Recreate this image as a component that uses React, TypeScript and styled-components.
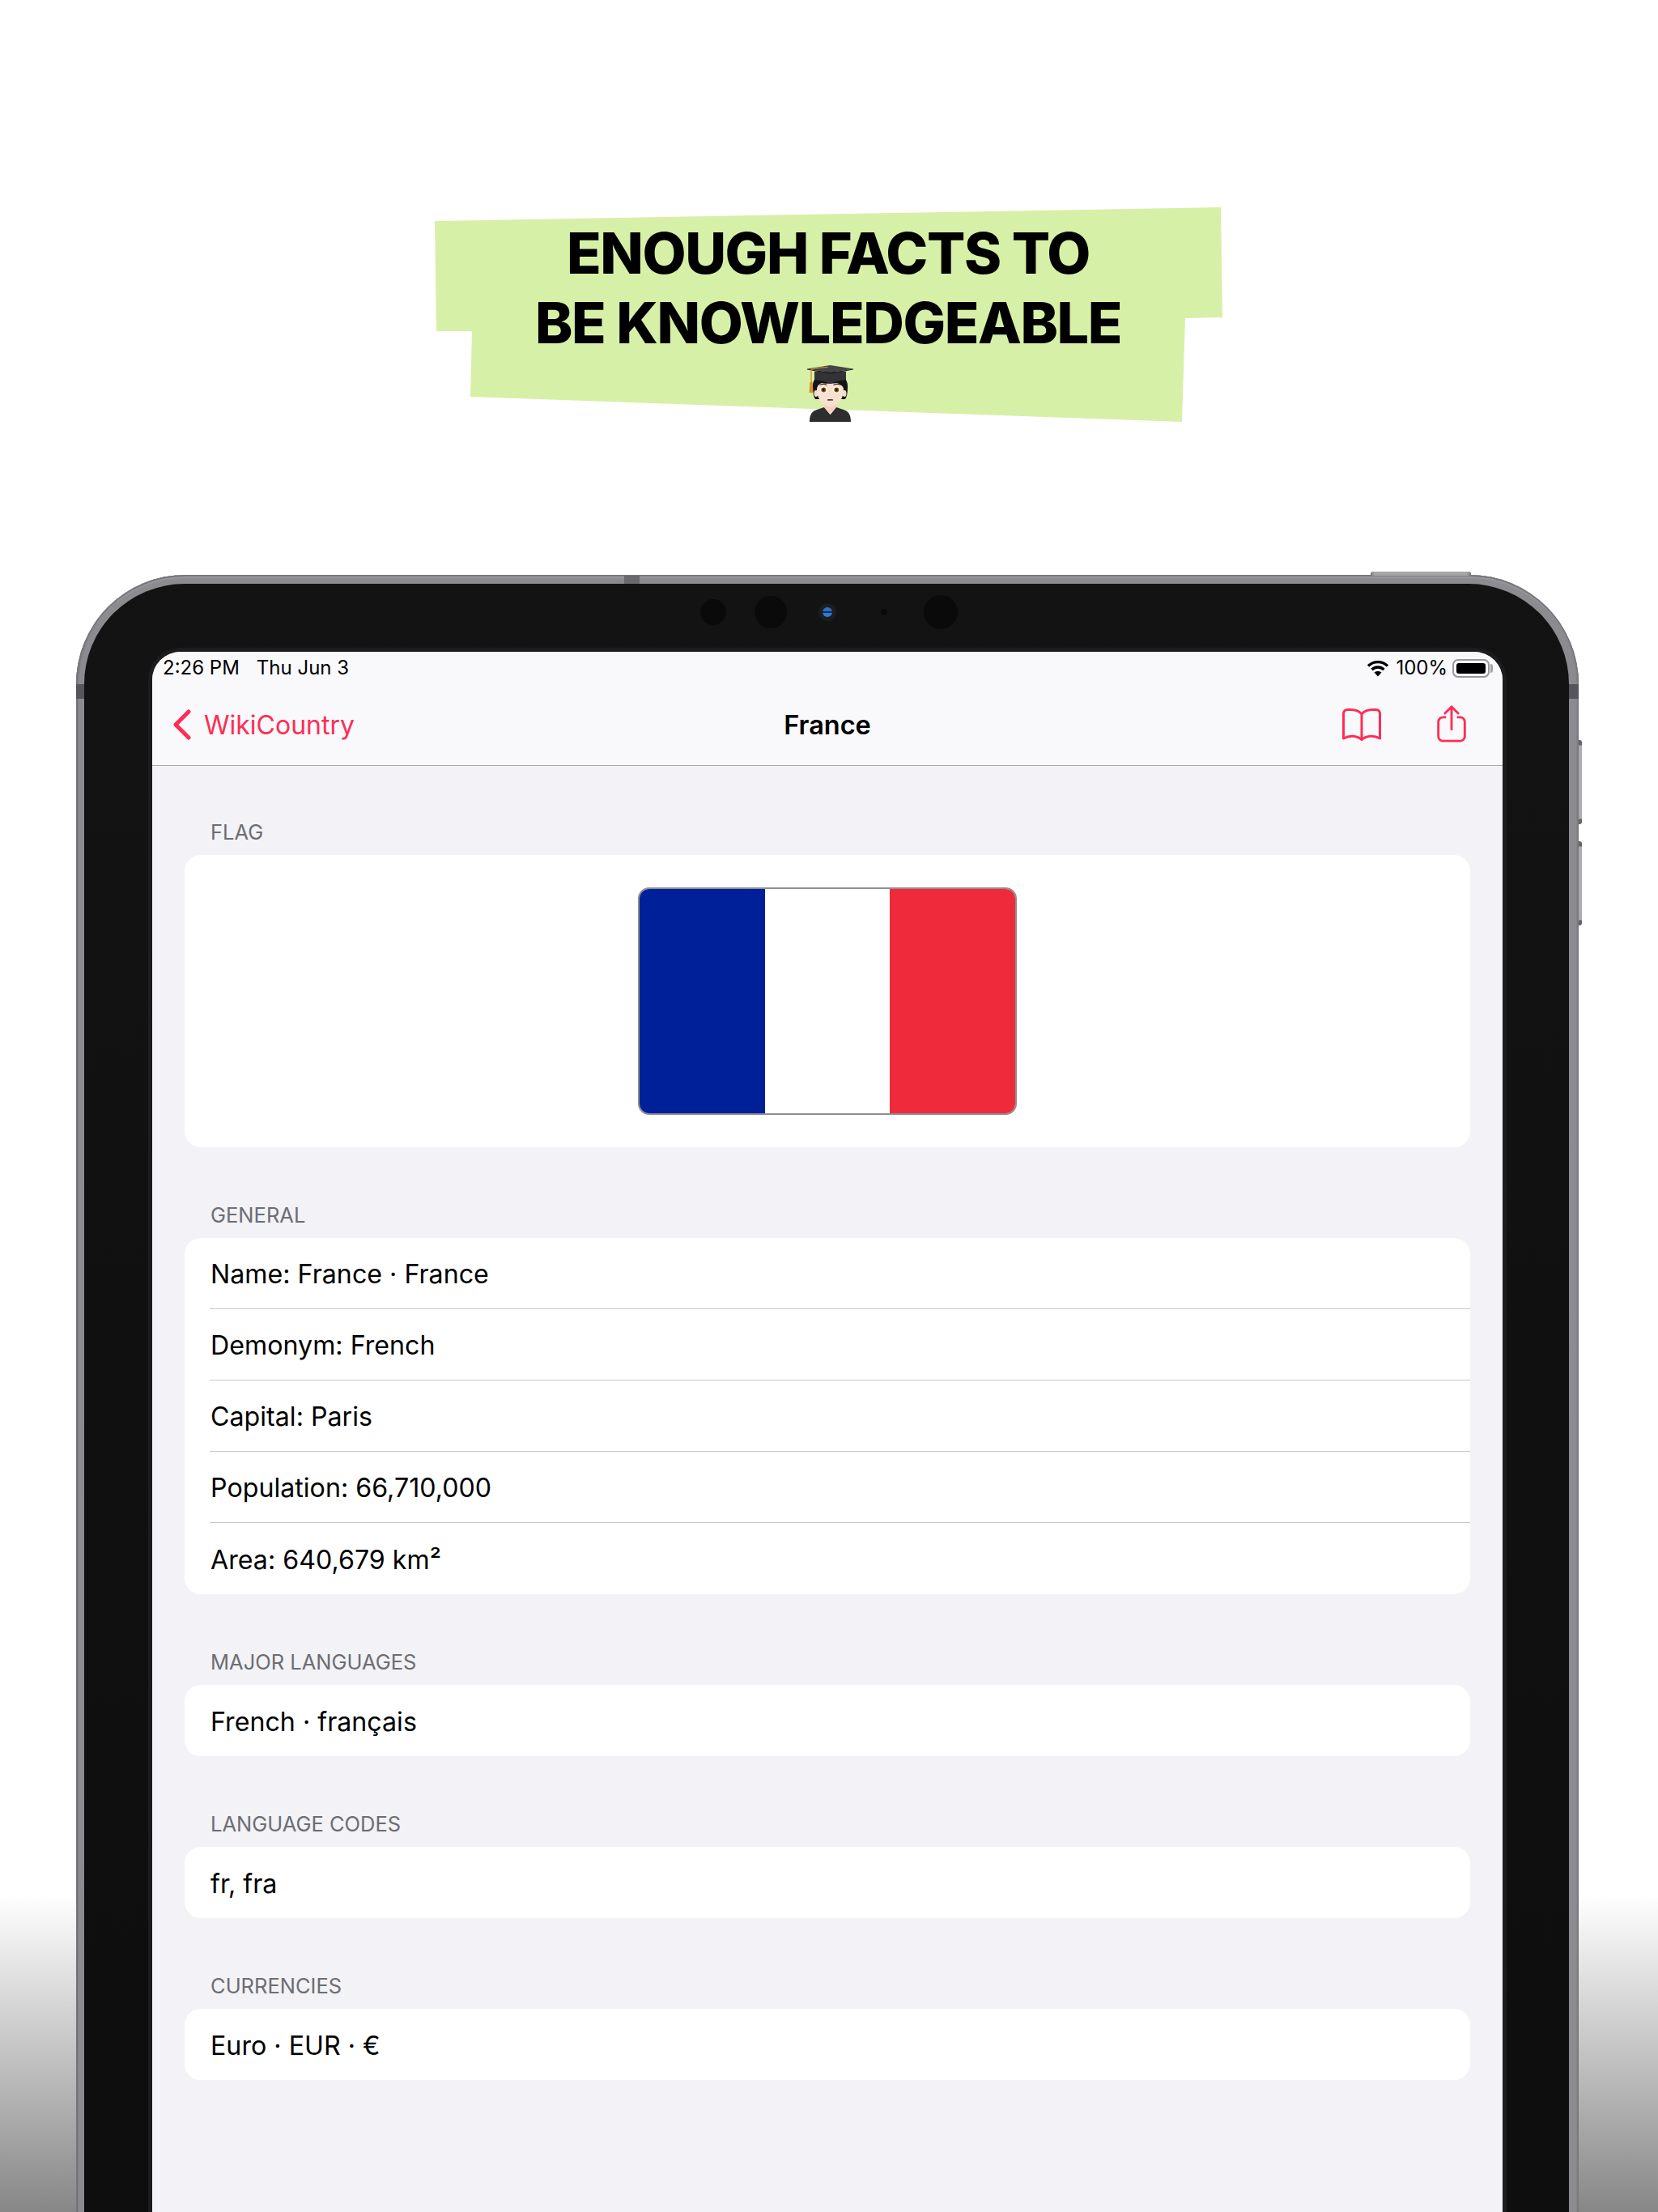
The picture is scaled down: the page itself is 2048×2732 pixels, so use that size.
import React from "react";
import styled, { createGlobalStyle } from "styled-components";

const Global = createGlobalStyle`
  html, body { margin: 0; padding: 0; background: #fff; }
  * { box-sizing: border-box; }
  body { font-family: Inter, "Liberation Sans", sans-serif; }
`;

const Page = styled.div`
  width: 2048px;
  height: 2732px;
  overflow: hidden;
  padding-top: 256px;
  background: linear-gradient(180deg, #fff 0, #fff 2340px, #878787 2732px);
`;

const Banner = styled.div`
  position: relative;
  width: 974px;
  height: 265px;
  margin-left: 537px;
  padding-top: 14px;
  display: flex;
  flex-direction: column;
  align-items: center;
  &::before {
    content: "";
    position: absolute;
    inset: 0;
    background: #d7f0a8;
    clip-path: polygon(0 17px, 971px 0, 973px 136px, 927px 137px, 923px 265px, 44px 234px, 46px 153px, 2px 153px);
  }
`;

const Headline = styled.h1`
  position: relative;
  margin: 0;
  width: 100%;
  padding-right: 2px;
  text-align: center;
  font-size: 70px;
  line-height: 86px;
  font-weight: 800;
  letter-spacing: -1.4px;
  color: #000;
`;

const Graduate = styled.svg`
  position: relative;
  display: block;
  width: 57px;
  height: 70px;
  margin: 9px 0 0 2px;
`;

const Device = styled.div`
  position: relative;
  width: 1856px;
  height: 2200px;
  margin: 189px 0 0 94px;
  padding: 11px 12px 0 10px;
  border-radius: 135px 135px 0 0;
  background: #8b8b90;
  box-shadow: inset 0 1px 0 1px #77777b, inset 0 4px 3px -1px #a6a6aa, inset 2px 0 2px #66666c, inset -2px 0 2px #77777b;
`;

const SideBand = styled.span<{ $side: "left" | "right" }>`
  position: absolute;
  top: 135px;
  ${(p) => (p.$side === "left" ? "left: 0; width: 10px;" : "right: 0; width: 12px;")}
  height: 18px;
  background: #56565a;
`;

const TopBand = styled.span`
  position: absolute;
  top: 1px;
  left: 677px;
  width: 19px;
  height: 10px;
  background: #6a6a6e;
`;

const PowerButton = styled.span`
  position: absolute;
  top: -4px;
  left: 1599px;
  width: 124px;
  height: 5px;
  border-radius: 3px 3px 0 0;
  background: linear-gradient(90deg, #77777a, #a7a7aa 4%, #a7a7aa 96%, #77777a);
`;

const VolumeButton = styled.span<{ $top: number }>`
  position: absolute;
  top: ${(p) => p.$top}px;
  right: -4px;
  width: 4px;
  height: 104px;
  border-radius: 0 3px 3px 0;
  background: linear-gradient(180deg, #66666a 0, #66666a 6px, #adadb0 7px, #adadb0 97px, #66666a 98px);
`;

const Bezel = styled.div`
  position: relative;
  height: 100%;
  padding: 79px 77px 0 79px;
  border-radius: 124px 124px 0 0;
  background: linear-gradient(180deg, #131313 0, #0e0e0e 1800px);
`;

const Sensors = styled.div`
  position: absolute;
  top: 14px;
  left: 761px;
  height: 42px;
  display: flex;
  align-items: center;
`;

const Lens = styled.span<{ $size: number; $gap: number }>`
  display: block;
  flex: none;
  width: ${(p) => p.$size}px;
  height: ${(p) => p.$size}px;
  margin-left: ${(p) => p.$gap}px;
  border-radius: 50%;
  background: #0a0a0a;
`;

const Camera = styled.span`
  flex: none;
  width: 22px;
  height: 22px;
  margin-left: 39px;
  display: grid;
  place-items: center;
  border-radius: 50%;
  background: #1b1d22;
  &::after {
    content: "";
    width: 12px;
    height: 12px;
    border-radius: 50%;
    background: linear-gradient(180deg, #2f6fc0 0, #2f6fc0 40%, #0d2a52 42%, #0d2a52 58%, #2f7bd0 60%);
  }
`;

const Screen = styled.div`
  height: 100%;
  border: 5px solid #1c1c1e;
  border-bottom: 0;
  border-radius: 40px 40px 0 0;
  overflow: hidden;
  background: #f2f2f7;
`;

const TopBar = styled.header`
  height: 141px;
  background: #f9f9fb;
  border-bottom: 1px solid #a8a8aa;
`;

const StatusBar = styled.div`
  height: 38px;
  padding: 2px 16px 0 13px;
  display: flex;
  justify-content: space-between;
  align-items: center;
  font-size: 24px;
  line-height: 28px;
  color: #000;
`;

const StatusGroup = styled.div`
  display: flex;
  align-items: center;
`;

const DateText = styled.span`
  margin-left: 21px;
`;

const Percent = styled.span`
  margin: 0 6px 0 8px;
`;

const Battery = styled.span`
  position: relative;
  width: 46px;
  height: 23px;
  padding: 3px;
  border: 2px solid #97979b;
  border-radius: 7px;
  &::before {
    content: "";
    display: block;
    height: 100%;
    border-radius: 3px;
    background: #000;
  }
  &::after {
    content: "";
    position: absolute;
    top: 4px;
    right: -6px;
    width: 3px;
    height: 11px;
    border-radius: 0 3px 3px 0;
    background: #a0a0a4;
  }
`;

const NavBar = styled.nav`
  height: 102px;
  padding-top: 2px;
  display: grid;
  grid-template-columns: 1fr auto 1fr;
  align-items: center;
`;

const BackLink = styled.div`
  padding-left: 25px;
  display: flex;
  align-items: center;
  gap: 16px;
  font-size: 32px;
  color: #ff2d55;
`;

const Title = styled.div`
  font-size: 32.5px;
  font-weight: 600;
  color: #000;
`;

const NavActions = styled.div`
  padding-right: 44px;
  display: flex;
  justify-content: flex-end;
  align-items: center;
  gap: 68px;
`;

const Content = styled.main`
  padding: 0 40px;
`;

const SectionLabel = styled.div<{ $first?: boolean }>`
  height: ${(p) => (p.$first ? 110 : 112)}px;
  padding: 0 0 13px 32px;
  display: flex;
  align-items: flex-end;
  font-size: 25.5px;
  line-height: 30px;
  color: #6d6d72;
  text-transform: uppercase;
`;

const Card = styled.section`
  border-radius: 20px;
  background: #fff;
  overflow: hidden;
`;

const FlagCell = styled.div`
  height: 361px;
  display: flex;
  justify-content: center;
  padding-top: 40px;
`;

const Flag = styled.div`
  width: 468px;
  height: 281px;
  display: flex;
  border: 2px solid #8e8e93;
  border-radius: 14px;
  overflow: hidden;
`;

const Stripe = styled.div<{ $color: string }>`
  flex: 1;
  background: ${(p) => p.$color};
`;

const Row = styled.div`
  height: 88px;
  margin-left: 31px;
  padding: 2px 0 0 1px;
  display: flex;
  align-items: center;
  font-size: 32.2px;
  color: #000;
  &:not(:last-child) {
    border-bottom: 1px solid #c6c6c8;
  }
`;

const pink = "#ff2d55";

const sections: { label: string; rows: string[] }[] = [
  {
    label: "General",
    rows: ["Name: France · France", "Demonym: French", "Capital: Paris", "Population: 66,710,000", "Area: 640,679 km²"],
  },
  { label: "Major languages", rows: ["French · français"] },
  { label: "Language codes", rows: ["fr, fra"] },
  { label: "Currencies", rows: ["Euro · EUR · €"] },
];

export default function App() {
  return (
    <Page>
      <Global />
      <Banner>
        <Headline>
          ENOUGH FACTS TO
          <br />
          BE KNOWLEDGEABLE
        </Headline>
        <Graduate viewBox="0 0 57 70" aria-label="student">
          <path d="M3 70c0-9 3-13 9-15l9-3 7.500 9 7.500-9 9 3c6 2 9 6 9 15z" fill="#2e2e30" />
          <path d="M21 44h15v8l-7.500 9-7.500-9z" fill="#f3d3bd" />
          <path d="M7 28C6 17 13 11 28.500 11S51 17 50 28c0 6-1 11-3 14H10C8 39 7 34 7 28z" fill="#151517" />
          <ellipse cx="11" cy="35" rx="2.500" ry="4" fill="#f6dcc9" />
          <ellipse cx="46" cy="35" rx="2.500" ry="4" fill="#f6dcc9" />
          <path d="M12 30c0-8 7-11 16.500-11S45 22 45 30c0 12-8 21-16.500 21S12 42 12 30z" fill="#f8e1d1" />
          <path d="M9 26c1-5 3-8 6-9h27c3 1 5 4 6 9l-3 2c-2-3-5-5-8-6-6 1-14 1-19 0-3 1-5 3-6 6z" fill="#151517" />
          <path d="M15.500 24.500c3-1.500 6-1.500 9 0M32.500 24.500c3-1.500 6-1.500 9 0" stroke="#3a2a22" strokeWidth="1.200" fill="none" />
          <ellipse cx="20.300" cy="30.500" rx="4.600" ry="4" fill="#fff" />
          <ellipse cx="36.300" cy="30.500" rx="4.600" ry="4" fill="#fff" />
          <circle cx="20.300" cy="30.500" r="3" fill="#8a5212" />
          <circle cx="36.300" cy="30.500" r="3" fill="#8a5212" />
          <circle cx="20.300" cy="30.500" r="1.400" fill="#111" />
          <circle cx="36.300" cy="30.500" r="1.400" fill="#111" />
          <rect x="25" y="42" width="7" height="1.800" rx="0.900" fill="#5b3f34" />
          <path d="M9 8h39v10c-6 1-13 2-19.500 5C22 20 15 19 9 18z" fill="#333336" />
          <path d="M0 4.500 28.500 0 57 4.500 28.500 9z" fill="#454548" />
          <path d="M0 4.500 28.500 9 57 4.500 57 5.500 28.500 11 0 5.500z" fill="#222224" />
          <path d="M4.500 5c8-1.500 15-2.300 21-2.700" stroke="#c98a1e" strokeWidth="1.200" fill="none" />
          <path d="M5 5.500V22" stroke="#d9952a" strokeWidth="1.400" fill="none" />
          <path d="M3.500 21h3l1 13H2.500z" fill="#d9922a" />
        </Graduate>
      </Banner>
      <Device>
        <SideBand $side="left" />
        <SideBand $side="right" />
        <TopBand />
        <PowerButton />
        <VolumeButton $top={204} />
        <VolumeButton $top={329} />
        <Bezel>
          <Sensors>
            <Lens $size={32} $gap={0} />
            <Lens $size={40} $gap={35} />
            <Camera />
            <Lens $size={8} $gap={55} />
            <Lens $size={42} $gap={45} />
          </Sensors>
          <Screen>
            <TopBar>
              <StatusBar>
                <StatusGroup>
                  <span>2:26 PM</span>
                  <DateText>Thu Jun 3</DateText>
                </StatusGroup>
                <StatusGroup>
                  <svg width="28" height="21" viewBox="0 0 28 21" aria-hidden="true">
                    <path d="M2 7.500C9 1 19 1 26 7.500" stroke="#000" strokeWidth="3.400" fill="none" />
                    <path d="M6.500 12c4.500-4 10.500-4 15 0" stroke="#000" strokeWidth="3.400" fill="none" />
                    <path d="M9.500 15.500c2.500-2 6.500-2 9 0L14 20.500z" fill="#000" />
                  </svg>
                  <Percent>100%</Percent>
                  <Battery />
                </StatusGroup>
              </StatusBar>
              <NavBar>
                <BackLink>
                  <svg width="23" height="38" viewBox="0 0 23 38" aria-hidden="true">
                    <path d="M20 3 4 19l16 16" stroke={pink} strokeWidth="5" strokeLinecap="round" strokeLinejoin="round" fill="none" />
                  </svg>
                  <span>WikiCountry</span>
                </BackLink>
                <Title>France</Title>
                <NavActions>
                  <svg width="48" height="40" viewBox="0 0 48 40" aria-hidden="true">
                    <path
                      d="M24 7C21 3 16 1.500 10 1.500H6.500C3.500 1.500 1.500 3.500 1.500 6.500V37c7-4 16-4 22.500 1.500C30.500 33 39.500 33 46.500 37V6.500c0-3-2-5-5-5H38C32 1.500 27 3 24 7zM24 7v31"
                      stroke={pink}
                      strokeWidth="3"
                      strokeLinejoin="round"
                      fill="none"
                    />
                  </svg>
                  <svg width="38" height="48" viewBox="0 0 38 50" aria-hidden="true">
                    <path
                      d="M12 15.500H8a6 6 0 0 0-6 6V40a6 6 0 0 0 6 6h22a6 6 0 0 0 6-6V21.500a6 6 0 0 0-6-6h-4"
                      stroke={pink}
                      strokeWidth="3"
                      fill="none"
                    />
                    <path d="M19 3v28M10.500 10.500 19 2l8.500 8.500" stroke={pink} strokeWidth="3" strokeLinecap="round" fill="none" />
                  </svg>
                </NavActions>
              </NavBar>
            </TopBar>
            <Content>
              <SectionLabel $first>Flag</SectionLabel>
              <Card>
                <FlagCell>
                  <Flag>
                    <Stripe $color="#00209a" />
                    <Stripe $color="#ffffff" />
                    <Stripe $color="#ef2b3b" />
                  </Flag>
                </FlagCell>
              </Card>
              {sections.map((section) => (
                <React.Fragment key={section.label}>
                  <SectionLabel>{section.label}</SectionLabel>
                  <Card>
                    {section.rows.map((row) => (
                      <Row key={row}>{row}</Row>
                    ))}
                  </Card>
                </React.Fragment>
              ))}
            </Content>
          </Screen>
        </Bezel>
      </Device>
    </Page>
  );
}
